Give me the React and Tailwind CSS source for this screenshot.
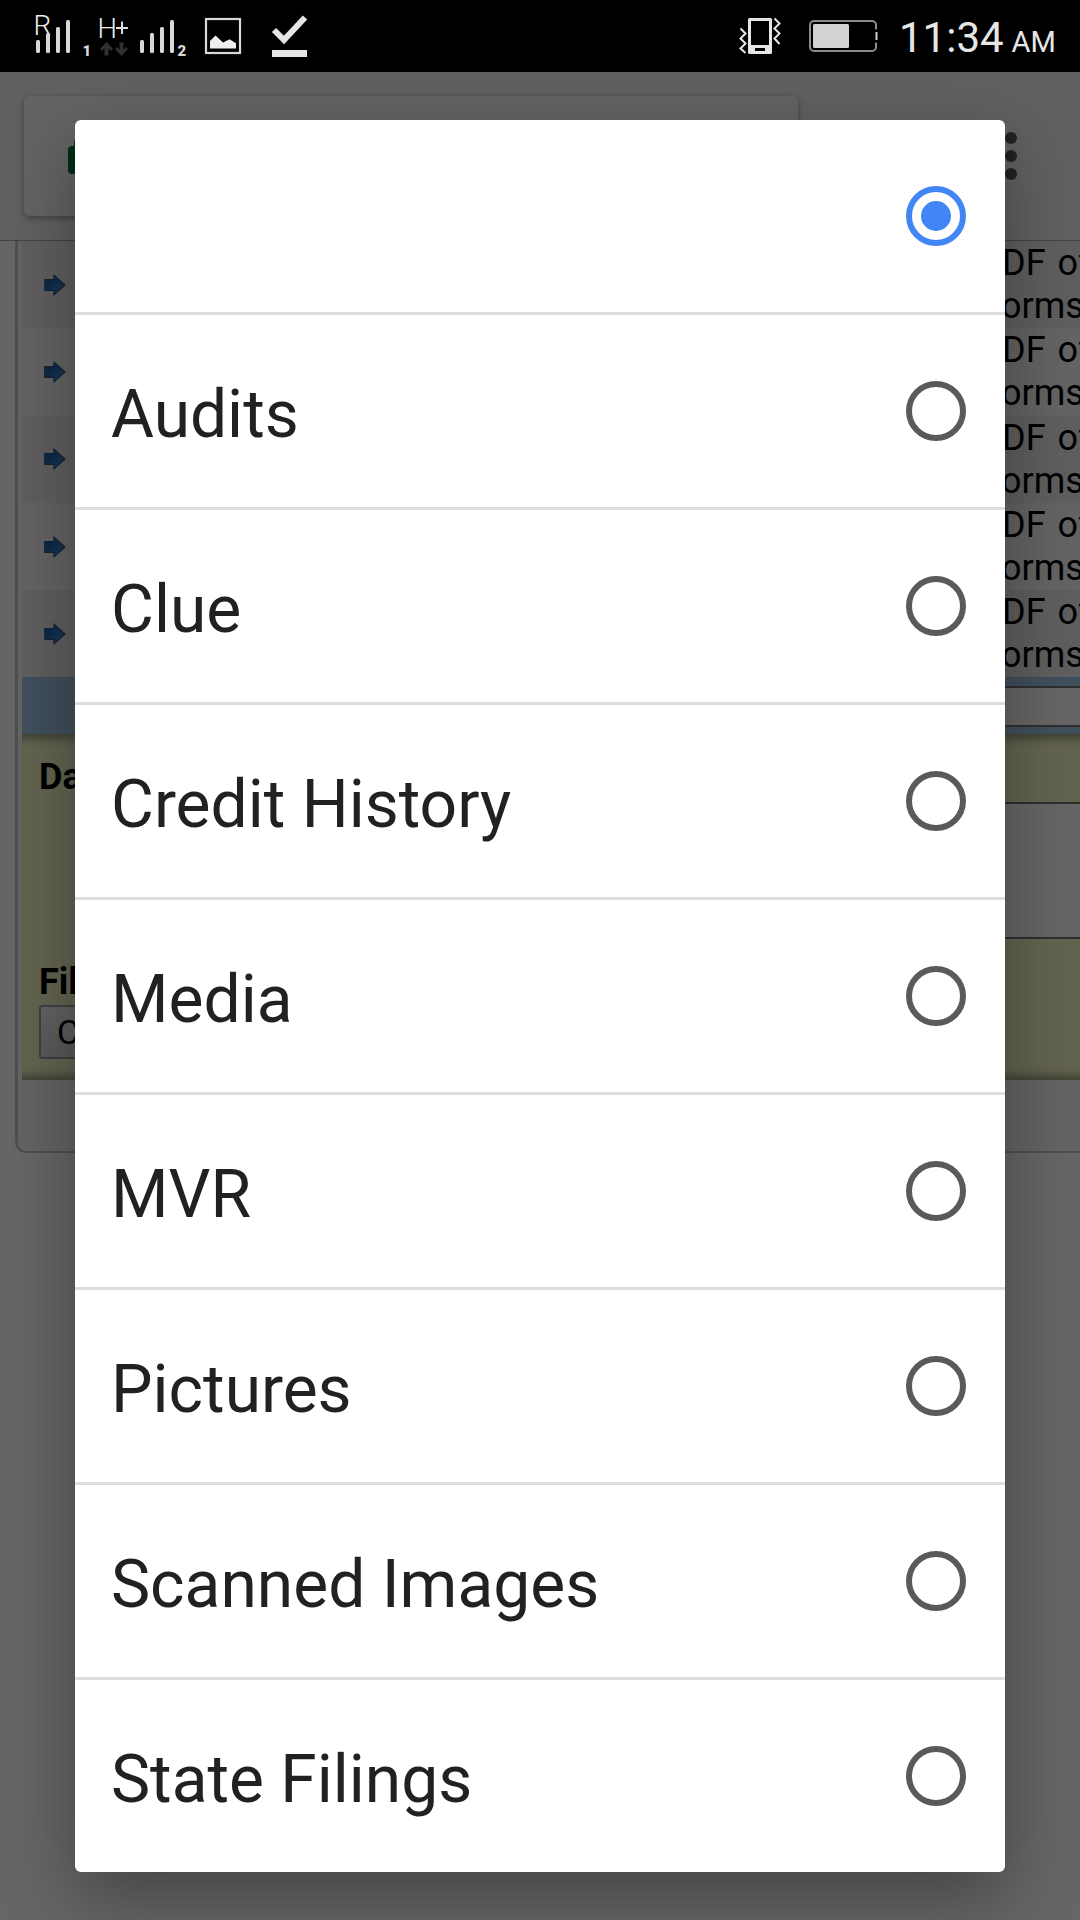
import React from "react";

const options = [
  "",
  "Audits",
  "Clue",
  "Credit History",
  "Media",
  "MVR",
  "Pictures",
  "Scanned Images",
  "State Filings",
];

function SignalIcons() {
  return (
    <svg width="320" height="72" viewBox="0 0 320 72" fill="#d8d8d8" fontFamily="Roboto, sans-serif">
      <text x="33.4" y="35.400" fontSize="28" fontWeight="300" fill="#eeeeee">R</text>
      <rect x="36" y="40" width="4" height="13" rx="1.5" />
      <rect x="46" y="33" width="4" height="20" rx="1.5" />
      <rect x="56" y="27" width="4" height="26" rx="1.5" />
      <rect x="66" y="20" width="4" height="33" rx="1.5" />
      <text x="82.5" y="55.500" fontSize="15" fontWeight="900">1</text>
      <text x="97.5" y="37.8" fontSize="27.500" fontWeight="300" fill="#eeeeee">H</text>
      <path d="M122 21.5v12.500M116 28h12" stroke="#dddddd" strokeWidth="2" />
      <path d="M106.500 42l6.500 7-2 2-2.500-2.500v7h-4v-7l-2.500 2.500-2-2z" fill="#303030" />
      <path d="M121.500 56l-6.500-7 2-2 2.500 2.500v-7h4v7l2.500-2.500 2 2z" fill="#303030" />
      <rect x="140" y="40" width="4" height="13" rx="1.5" />
      <rect x="150" y="33" width="4" height="20" rx="1.5" />
      <rect x="160" y="27" width="4" height="26" rx="1.5" />
      <rect x="170" y="20" width="4" height="33" rx="1.5" />
      <text x="177.500" y="55.500" fontSize="15" fontWeight="900">2</text>
      <rect x="206" y="19" width="34" height="34" fill="none" stroke="#d8d8d8" strokeWidth="2.200" />
      <path d="M210 48.500v-7.500l5.500-5.500 7.500 7 6.500-3.200 6.500 4v5.200z" fill="#eeeeee" />
      <path d="M274 30l10 10 21-22.500" fill="none" stroke="#e6e6e6" strokeWidth="6" />
      <rect x="272" y="50" width="35" height="7" fill="#e6e6e6" />
    </svg>
  );
}

function VibrateIcon() {
  return (
    <svg width="44" height="40" viewBox="738 16 44 40" fill="none" stroke="#e6e6e6">
      <path d="M748 19.500a1.500 1.500 0 0 1 1.500-1.500h21a1.500 1.500 0 0 1 1.500 1.500v33a1.500 1.500 0 0 1-1.500 1.500h-21a1.500 1.500 0 0 1-1.500-1.500zM751 21v24h18V21zM755 48v3h10v-3z" fill="#e6e6e6" fillRule="evenodd" stroke="none" />
      <path d="M740.500 28.500l5 5-5 5 5 5-5 5 5 4.500M774.500 18.500l5 5-5 5 5 5-5 5 5 5.500" strokeWidth="2" />
    </svg>
  );
}

function BatteryIcon() {
  return (
    <svg width="70" height="34" viewBox="808 19 70 34" fill="none">
      <path d="M876 29.500V25a4 4 0 0 0-4-4h-58a4 4 0 0 0-4 4v22a4 4 0 0 0 4 4h58a4 4 0 0 0 4-4v-4.500" stroke="#8c8c8c" strokeWidth="2" />
      <path d="M876.500 32v8" stroke="#d0d0d0" strokeWidth="2" />
      <rect x="813" y="24" width="36" height="24" rx="1.500" fill="#d2d2d2" />
    </svg>
  );
}

function StatusBar() {
  return (
    <header className="flex h-[72px] items-center bg-black text-[#e6e6e6]">
      <SignalIcons />
      <div className="flex h-full items-center pl-[418px]">
        <VibrateIcon />
        <div className="ml-[26px]"><BatteryIcon /></div>
        <div className="ml-[21px] flex items-baseline pt-[3px] leading-none">
          <span className="text-[42px]">11:34</span>
          <span className="ml-[8px] text-[29px]">AM</span>
        </div>
      </div>
    </header>
  );
}

function ArrowIcon() {
  return (
    <svg width="22" height="22" viewBox="0 0 22 22">
      <defs>
        <linearGradient id="arrow" x1="0" y1="0" x2="1" y2="1">
          <stop offset="0" stopColor="#1858a0" />
          <stop offset="0.45" stopColor="#2070c0" />
          <stop offset="1" stopColor="#5c9cd8" />
        </linearGradient>
      </defs>
      <path d="M.8 5.500h9.200V1.200L21 11 10 20.800v-4.300H.8z" fill="url(#arrow)" stroke="#345878" strokeWidth="1.200" />
    </svg>
  );
}

function FormRow({ shaded }) {
  return (
    <div className={`flex h-[87.3px] items-center justify-between pl-[22px] ${shaded ? "bg-[#eeeeee]" : "bg-[#fafafa]"}`}>
      <ArrowIcon />
      <div className="w-[78px] whitespace-nowrap pt-[1px] text-[36px] leading-[43.2px]">
        <div className="[word-spacing:3px]">DF of</div>
        <div className="-ml-[1px]">orms</div>
      </div>
    </div>
  );
}

function Page() {
  return (
    <div className="h-[1848px] bg-white">
      <div className="flex h-[169px] justify-between border-b border-[#a8a8a8] bg-[#f2f2f2] py-[24px] pl-[24px]">
        <div className="flex h-[120px] w-[774px] items-start rounded-[6px] bg-[#fafafa] pl-[44px] pt-[36px] shadow-[0_2px_6px_rgba(0,0,0,0.35)]">
          <svg width="32" height="42" viewBox="0 0 32 42" fill="#007038">
            <rect y="14" width="32" height="28" rx="4" />
            <path d="M8 16V11a8 8 0 0 1 16 0v5" fill="none" stroke="#007038" strokeWidth="4" />
          </svg>
        </div>
        <div className="mr-[63px] flex flex-col items-center gap-[6px] pt-[36px]">
          <i className="size-[12px] rounded-full bg-[#555555]" />
          <i className="size-[12px] rounded-full bg-[#555555]" />
          <i className="size-[12px] rounded-full bg-[#555555]" />
        </div>
      </div>
      <div className="ml-[15px] h-[912px] rounded-bl-[11px] border-b-2 border-l-[3px] border-[#c8c8c8] bg-[#fafafa] pl-[4px]">
        <FormRow shaded />
        <FormRow />
        <FormRow shaded />
        <FormRow />
        <FormRow shaded />
        <div className="flex h-[56.500px] items-start justify-end bg-[#a2c8e8] pt-[9px]">
          <div className="h-[41px] w-[400px] border-y-2 border-[#767676] bg-white" />
        </div>
        <div className="flex h-[346px] justify-between bg-[#f8f9c8] shadow-[inset_0_12px_10px_-8px_rgba(0,0,0,0.4),inset_0_-12px_10px_-8px_rgba(0,0,0,0.4)]">
          <div className="flex flex-col pl-[17px] pt-[22px] text-[36px] leading-[42px]">
            <b>Date</b>
            <b className="mt-[163px]">File</b>
            <div className="mt-[2px] flex h-[54px] w-[200px] items-center rounded-[3px] border-2 border-[#a0a0a0] bg-gradient-to-b from-[#f8f8f8] to-[#dddddd] pl-[16px] text-[34px]">Choose</div>
          </div>
          <div className="mt-[68px] h-[137px] w-[400px] border-y-2 border-[#767676] bg-white" />
        </div>
      </div>
    </div>
  );
}

function Radio({ checked }) {
  return (
    <span className={`flex size-[60px] items-center justify-center rounded-full border-[6px] ${checked ? "border-[#4285f4]" : "border-[#5a5a5a]"}`}>
      {checked && <span className="size-[30px] rounded-full bg-[#4285f4]" />}
    </span>
  );
}

export default function App() {
  return (
    <main className="relative h-[1920px] w-[1080px] overflow-hidden font-['Roboto',sans-serif] text-black">
      <StatusBar />
      <Page />
      <div className="absolute inset-x-0 bottom-0 top-[72px] overflow-hidden bg-black/60 px-[75px] pt-[48px]">
        <ul className="divide-y-[3px] divide-[#dedede] overflow-hidden rounded-[6px] bg-white shadow-[0_24px_72px_rgba(0,0,0,0.35)]">
          {options.map((label, i) => (
            <li key={i} className="box-content flex h-[192px] items-center justify-between pl-[36px] pr-[39px]">
              <span className="pt-[8px] text-[65.9px] leading-[78px] text-[#212121]">{label}</span>
              <Radio checked={i === 0} />
            </li>
          ))}
        </ul>
      </div>
    </main>
  );
}
